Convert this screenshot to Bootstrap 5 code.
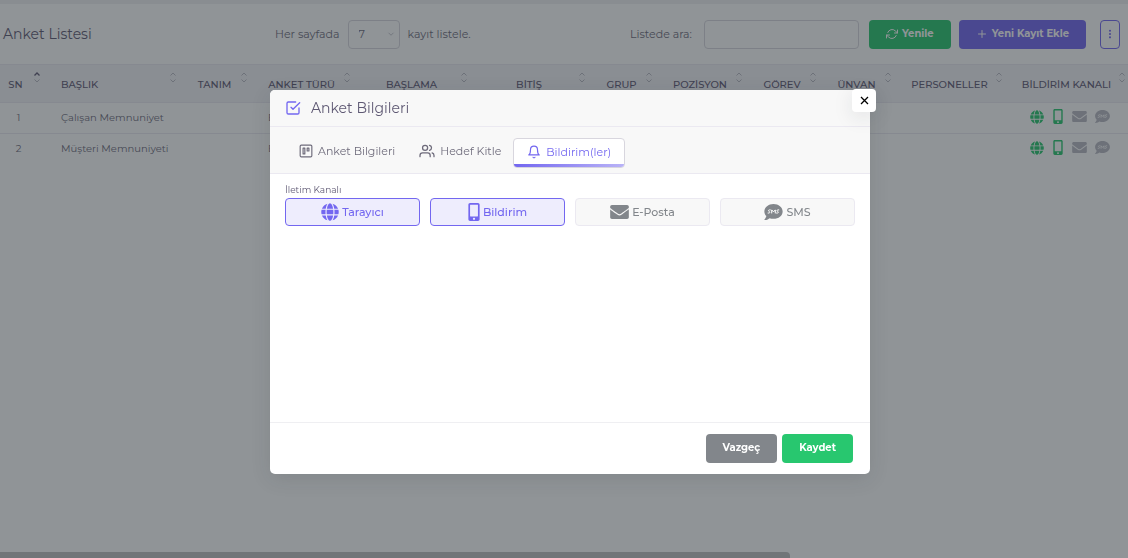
<!DOCTYPE html>
<html lang="tr">
<head>
<meta charset="utf-8">
<meta name="viewport" content="width=device-width, initial-scale=1">
<title>Anket Listesi</title>
<link href="https://cdn.jsdelivr.net/npm/bootstrap@5.3.0/dist/css/bootstrap.min.css" rel="stylesheet">
<style>
  :root { --violet: #7367f0; --leaf: #28c76f; --ink: #5e5873; --soft: #6e6b7b; --steel: #82868b; --line: #ebe9f1; }
  body { font-family: Montserrat, Inter, "Noto Sans", sans-serif; font-size: 11px; line-height: 16px; color: var(--soft); background: #fff; }
  svg { display: block; flex: none; }
  .line-icon { fill: none; stroke: currentColor; stroke-width: 2; stroke-linecap: round; stroke-linejoin: round; }
  .top-strip { height: 4px; background: #f0f0f3; }
  .toolbar { height: 60px; padding: 0 8px 0 3px; }
  .page-title { font-size: 14px; line-height: 20px; font-weight: 400; color: var(--ink); }
  .toolbar .form-select, .toolbar .form-control { height: 29px; font-size: 11px; line-height: 16px; padding: 4px 10px; color: var(--soft); border-color: #d8d6de; border-radius: 4px; }
  .toolbar .form-select { width: 52px; background-size: 10px; background-position: right 3px center; background-image: url("data:image/svg+xml,%3Csvg xmlns='http://www.w3.org/2000/svg' viewBox='0 0 24 24' fill='none' stroke='%23b9b9c3' stroke-width='2'%3E%3Cpath d='M6 9l6 6 6-6'/%3E%3C/svg%3E"); }
  .toolbar .form-control { width: 155px; margin-right: 10px; }
  .btn { height: 29px; font-size: 10px; line-height: 16px; font-weight: 700; border-radius: 4px; padding: 0 16px; }
  .btn-leaf, .btn-leaf:hover { background: var(--leaf); color: #fff; }
  .btn-violet, .btn-violet:hover { background: var(--violet); color: #fff; }
  .btn-steel, .btn-steel:hover { background: var(--steel); color: #fff; }
  .btn-dots { border: 1px solid var(--violet); color: var(--violet); width: 20px; padding: 0; margin-left: 14px; }
  .survey-table { table-layout: fixed; font-size: 10px; line-height: 16px; color: var(--soft); --bs-table-color: var(--soft); }
  .survey-table > thead > tr > th { position: relative; height: 38px; padding: 3px 0 0; background: #f3f2f7; border-top: 1px solid var(--line); border-bottom: 1px solid var(--line); font-size: 10px; font-weight: 500; color: var(--ink); vertical-align: middle; text-align: center; white-space: nowrap; }
  .survey-table > tbody > tr > td { height: 31px; padding: 0; border-bottom: 1px solid var(--line); vertical-align: middle; text-align: center; white-space: nowrap; }
  .survey-table > tbody > tr:last-child > td { border-bottom: 0; }
  .survey-table > thead > tr > th.first-col { padding-right: 12px; }
  .survey-table > tbody > tr > td.first-col { padding-right: 6px; }
  .survey-table > thead > tr > th.name-col, .survey-table > tbody > tr > td.name-col, .survey-table > tbody > tr > td.kind-col { text-align: left; padding-left: 18px; }
  .sorter { position: absolute; top: 7px; right: 2px; color: #b9b9c3; }
  .on { color: var(--leaf); } .off { color: #b9b9c3; }
  .channels { gap: 8px; margin-bottom: 3px; padding-left: 6px; }
  .scroll-thumb { width: 70%; height: 6px; background: #c1c1c1; border-radius: 0 4px 0 0; }
  .modal-backdrop { --bs-backdrop-bg: #22292f; }
  .modal { padding-left: 12px; }
  .modal-dialog { max-width: 600px; margin-top: 90px; }
  .modal-content { border: 0; border-radius: 5px; box-shadow: 0 5px 20px rgba(34,41,47,.12); color: var(--soft); }
  .modal-header { height: 37px; padding: 0 15px; background: #f8f8f8; border-color: var(--line); border-radius: 5px 5px 0 0; gap: 10px; justify-content: flex-start; }
  .modal-title { font-size: 14px; line-height: 20px; font-weight: 400; color: var(--ink); }
  .close-btn { position: absolute; top: -1px; right: -6px; width: 24px; height: 23px; padding: 0; border: 0; border-radius: 4px; background: #fff; color: #000; box-shadow: 0 5px 20px rgba(34,41,47,.1); }
  .tab-bar { height: 47px; padding: 5px 17px 0; background: #f8f8f8; border-bottom: 1px solid var(--line); }
  .tab-bar .nav-link { display: flex; align-items: center; gap: 5px; height: 30px; padding: 0 11px 3px; border: 1px solid transparent; border-radius: 4px; color: var(--soft); }
  .tab-bar .nav-link.active { position: relative; overflow: hidden; padding: 0 13px 1px; background: #fff; border-color: #d8d6de; color: var(--violet); }
  .tab-bar .nav-link.active::after { content: ""; position: absolute; left: 0; right: 0; bottom: 0; height: 3px; background: linear-gradient(90deg, #7367f0, #b9b3f7); }
  .modal-body { padding: 8px 15px; min-height: 248px; }
  .field-label { font-size: 9px; line-height: 16px; color: var(--ink); font-weight: 400; float: none; margin: 0; }
  .channel-grid { display: grid; grid-template-columns: repeat(4, 1fr); gap: 10px; }
  .channel { height: 28px; border: 1px solid var(--line); border-radius: 4px; background: #f8f8f8; color: var(--steel); font-weight: 500; gap: 3px; cursor: pointer; }
  .btn-check:checked + .channel { border-color: var(--violet); background: #eeedfd; color: var(--violet); }
  .modal-footer { height: 52px; padding: 0 17px 0 0; gap: 5px; border-color: #efeff2; }
  .modal-footer > * { margin: 0; }
  .modal-footer .btn { padding-bottom: 2px; }
</style>
</head>
<body>
<svg class="d-none" aria-hidden="true">
  <symbol id="globe" viewBox="0 0 496 512"><path fill="currentColor" d="M336.500 160C322 70.700 287.800 8 248 8s-74 62.700-88.500 152h177zM152 256c0 22.200 1.200 43.500 3.300 64h185.300c2.100-20.500 3.300-41.800 3.300-64s-1.200-43.500-3.300-64H155.300c-2.100 20.500-3.300 41.800-3.300 64zm324.700-96c-28.600-67.900-86.500-120.400-158-141.600 24.400 33.800 41.200 84.700 50 141.600h108zM177.200 18.400C105.800 39.600 47.800 92.100 19.300 160h108c8.700-56.900 25.500-107.800 49.900-141.600zM487.400 192H372.700c2.100 21 3.300 42.500 3.300 64s-1.200 43-3.300 64h114.600c5.500-20.500 8.600-41.800 8.600-64s-3.100-43.500-8.500-64zM120 256c0-21.500 1.200-43 3.300-64H8.600C3.200 212.500 0 233.800 0 256s3.200 43.500 8.600 64h114.600c-2-21-3.200-42.500-3.200-64zm39.500 96c14.500 89.300 48.700 152 88.500 152s74-62.700 88.500-152h-177zm159.300 141.600c71.400-21.200 129.400-73.700 158-141.600h-108c-8.800 56.900-25.600 107.800-50 141.600zM19.300 352c28.600 67.900 86.500 120.400 158 141.600-24.400-33.800-41.200-84.700-50-141.600h-108z"/></symbol>
  <symbol id="phone" viewBox="0 0 320 512"><path fill="currentColor" d="M272 0H48C21.500 0 0 21.500 0 48v416c0 26.500 21.500 48 48 48h224c26.500 0 48-21.500 48-48V48c0-26.500-21.500-48-48-48zM160 480c-17.700 0-32-14.300-32-32s14.300-32 32-32 32 14.300 32 32-14.300 32-32 32zm112-108c0 6.600-5.400 12-12 12H60c-6.600 0-12-5.400-12-12V60c0-6.600 5.400-12 12-12h200c6.600 0 12 5.400 12 12v312z"/></symbol>
  <symbol id="mail" viewBox="0 64 512 384"><path fill="currentColor" d="M502.300 190.800c3.900-3.100 9.700-.2 9.700 4.700V400c0 26.500-21.500 48-48 48H48c-26.500 0-48-21.500-48-48V195.600c0-5 5.700-7.800 9.700-4.700 22.400 17.400 52.100 39.500 154.100 113.600 21.100 15.400 56.700 47.800 92.200 47.600 35.700.3 72-32.800 92.300-47.600 102-74.100 131.600-96.300 154-113.700zM256 320c23.200.4 56.600-29.200 73.400-41.400 132.700-96.300 142.800-104.700 173.400-128.700 5.800-4.500 9.200-11.500 9.200-18.900v-19c0-26.500-21.500-48-48-48H48c-26.500 0-48 21.500-48 48v19c0 7.400 3.400 14.300 9.200 18.900 30.600 23.900 40.700 32.400 173.400 128.700 16.800 12.200 50.200 41.800 73.400 41.400z"/></symbol>
  <symbol id="sms" viewBox="0 32 512 448"><path fill="currentColor" d="M256 32C114.600 32 0 125.100 0 240c0 49.600 21.400 95 57 130.700C44.500 421.100 2.700 466 2.200 466.500c-2.200 2.300-2.800 5.700-1.500 8.700 1.300 3 4.100 4.800 7.300 4.800 66.300 0 116-31.800 140.600-51.400 32.700 12.300 69 19.400 107.400 19.400 141.400 0 256-93.100 256-208S397.400 32 256 32z"/><path fill="none" stroke="#fff" stroke-width="28" stroke-linejoin="round" stroke-linecap="round" d="M166 197h-24c-34 0-34 38-8 43 29 6 25 45-6 45h-24M206 285v-88l50 56 50-56v88M404 197h-24c-34 0-34 38-8 43 29 6 25 45-6 45h-24"/></symbol>
  <symbol id="sort" viewBox="0 0 8 12"><path fill="none" stroke="currentColor" d="M1.500 3.500L4 1l2.500 2.500M1.500 7.500L4 10l2.500-2.500"/></symbol>
  <symbol id="sort-up" viewBox="0 0 8 12"><path fill="none" stroke="#5e5873" stroke-width="1.300" d="M1.500 3.500L4 1l2.500 2.500"/><path fill="none" stroke="currentColor" d="M1.500 7.500L4 10l2.500-2.500"/></symbol>
</svg>

<div class="d-flex flex-column vh-100 overflow-hidden">
  <div class="top-strip"></div>
  <header class="toolbar d-flex align-items-center">
    <h1 class="page-title mb-0">Anket Listesi</h1>
    <div class="d-flex align-items-center gap-2 mx-auto ps-4">
      <label for="pageSize">Her sayfada</label>
      <select id="pageSize" class="form-select"><option>7</option><option>10</option><option>25</option></select>
      <span>kayıt listele.</span>
    </div>
    <div class="d-flex align-items-center">
      <label for="search" class="me-2">Listede ara:</label>
      <input id="search" type="search" class="form-control ms-1">
      <button type="button" class="btn btn-leaf d-flex align-items-center gap-1 me-2">
        <svg class="line-icon" width="12" height="12" viewBox="0 0 24 24"><path d="M23 4v6h-6M1 20v-6h6M3.500 9a9 9 0 0 1 14.900-3.400L23 10M1 14l4.600 4.400A9 9 0 0 0 20.500 15"/></svg>Yenile</button>
      <button type="button" class="btn btn-violet d-flex align-items-center gap-1">
        <svg class="line-icon" width="12" height="12" viewBox="0 0 24 24"><path d="M12 5v14M5 12h14"/></svg>Yeni Kayıt Ekle</button>
      <button type="button" class="btn btn-dots d-flex align-items-center justify-content-center" aria-label="Diğer">
        <svg width="10" height="10" viewBox="0 0 24 24" fill="currentColor"><circle cx="12" cy="4" r="2.500"/><circle cx="12" cy="12" r="2.500"/><circle cx="12" cy="20" r="2.500"/></svg></button>
    </div>
  </header>

  <table class="survey-table table mb-0">
    <colgroup id="cols"></colgroup>
    <thead><tr id="heads"></tr></thead>
    <tbody id="rows"></tbody>
  </table>
  <div class="scroll-thumb mt-auto"></div>
</div>

<div class="modal-backdrop show"></div>
<div class="modal show d-block" tabindex="-1" role="dialog" aria-labelledby="dialogTitle">
  <div class="modal-dialog">
    <div class="modal-content">
      <div class="modal-header">
        <svg class="line-icon" width="16" height="16" viewBox="0 0 24 24" color="#7367f0"><path d="M9 11l3 3L22 4M21 12v7a2 2 0 0 1-2 2H5a2 2 0 0 1-2-2V5a2 2 0 0 1 2-2h11"/></svg>
        <h2 class="modal-title" id="dialogTitle">Anket Bilgileri</h2>
        <button type="button" class="close-btn d-flex align-items-center justify-content-center" aria-label="Kapat">
          <svg width="9" height="9" viewBox="0 0 9 9" fill="none" stroke="currentColor" stroke-width="1.300"><path d="M1 1l7 7M8 1L1 8"/></svg></button>
      </div>
      <nav class="tab-bar nav align-items-center flex-nowrap">
        <a class="nav-link" href="#bilgi"><svg class="line-icon" width="14" height="14" viewBox="0 0 24 24"><rect x="2" y="2" width="20" height="20" rx="2"/><path d="M7 7h3v10H7zM14 7h3v5h-3z"/></svg>Anket Bilgileri</a>
        <a class="nav-link" href="#hedef"><svg class="line-icon" width="16" height="14" viewBox="0 0 24 22"><path d="M17 20v-2a4 4 0 0 0-4-4H5a4 4 0 0 0-4 4v2M23 20v-2a4 4 0 0 0-3-3.900M16 2.100a4 4 0 0 1 0 7.800"/><circle cx="9" cy="6" r="4"/></svg>Hedef Kitle</a>
        <a class="nav-link active" href="#bildirim" aria-current="page"><svg class="line-icon" width="14" height="14" viewBox="0 0 24 24"><path d="M18 8A6 6 0 0 0 6 8c0 7-3 9-3 9h18s-3-2-3-9M13.700 21a2 2 0 0 1-3.400 0"/></svg>Bildirim(ler)</a>
      </nav>
      <div class="modal-body">
        <fieldset>
          <legend class="field-label">İletim Kanalı</legend>
          <div class="channel-grid">
            <div><input class="btn-check" type="checkbox" id="c1" checked><label class="channel d-flex align-items-center justify-content-center" for="c1"><svg width="18" height="18"><use href="#globe"/></svg>Tarayıcı</label></div>
            <div><input class="btn-check" type="checkbox" id="c2" checked><label class="channel d-flex align-items-center justify-content-center" for="c2"><svg width="12" height="18"><use href="#phone"/></svg>Bildirim</label></div>
            <div><input class="btn-check" type="checkbox" id="c3"><label class="channel d-flex align-items-center justify-content-center" for="c3"><svg width="19" height="14"><use href="#mail"/></svg>E-Posta</label></div>
            <div><input class="btn-check" type="checkbox" id="c4"><label class="channel d-flex align-items-center justify-content-center" for="c4"><svg width="19" height="16"><use href="#sms"/></svg>SMS</label></div>
          </div>
        </fieldset>
      </div>
      <div class="modal-footer flex-nowrap">
        <button type="button" class="btn btn-steel">Vazgeç</button>
        <button type="button" class="btn btn-leaf">Kaydet</button>
      </div>
    </div>
  </div>
</div>

<script src="https://cdn.jsdelivr.net/npm/bootstrap@5.3.0/dist/js/bootstrap.bundle.min.js"></script>
<script>
  const columns = [["SN",43],["BAŞLIK",136],["TANIM",71],["ANKET TÜRÜ",103],["BAŞLAMA",117],["BİTİŞ",118],["GRUP",67],["POZİSYON",90],["GÖREV",74],["ÜNVAN",75],["PERSONELLER",111],["BİLDİRİM KANALI",123]];
  const total = columns.reduce((sum, c) => sum + c[1], 0);
  const extra = i => ["first-col", "name-col", "", "kind-col"][i] || "";
  document.getElementById("cols").innerHTML = columns.map(c => `<col style="width:${c[1] / total * 100}%">`).join("");
  document.getElementById("heads").innerHTML = columns.map((c, i) => `<th scope="col" class="${extra(i)}">${c[0]}<svg class="sorter" width="8" height="12"><use href="#${i ? "sort" : "sort-up"}"/></svg></th>`).join("");
  const icons = `<div class="channels d-flex align-items-center justify-content-center"><svg class="on" width="14" height="14"><use href="#globe"/></svg><svg class="on" width="12" height="15"><use href="#phone"/></svg><svg class="off" width="15" height="11"><use href="#mail"/></svg><svg class="off" width="15" height="13"><use href="#sms"/></svg></div>`;
  document.getElementById("rows").innerHTML = ["Çalışan Memnuniyet", "Müşteri Memnuniyeti"].map((name, r) =>
    "<tr>" + columns.map((c, i) => `<td class="${extra(i)}">${i === 0 ? r + 1 : i === 1 ? name : i === 3 ? "Ek" : i === 11 ? icons : ""}</td>`).join("") + "</tr>").join("");
</script>
</body>
</html>
